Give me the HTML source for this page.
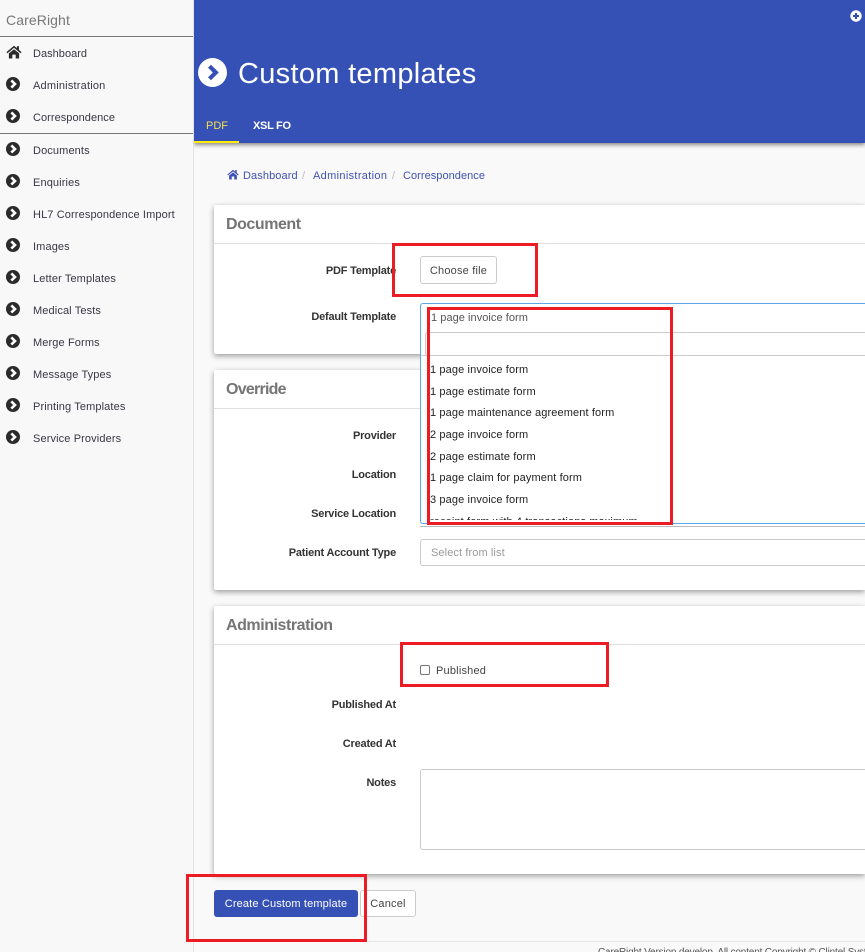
<!DOCTYPE html>
<html lang="en">
<head>
<meta charset="utf-8">
<title>Custom templates</title>
<style>
html,body{margin:0;padding:0;width:865px;height:952px;overflow:hidden;background:#f9f9f9;font-family:"Liberation Sans",sans-serif;font-size:11px;color:#333}
*{box-sizing:border-box}
#wrap{position:absolute;left:0;top:0;width:865px;height:952px;overflow:hidden}
.a{position:absolute;white-space:nowrap}
#side{position:absolute;left:0;top:0;width:194px;height:952px;background:#f8f8f8;border-right:1px solid #e3e3e3;z-index:2}
.hr{position:absolute;left:0;width:193px;height:1px;background:#777}
.nav{position:absolute;left:33px;font-size:11px;line-height:14px;color:#3b3644;letter-spacing:.12px;white-space:nowrap}
.ic{position:absolute;left:6px;width:14px;height:14px}
.card{position:absolute;left:214px;width:651px;background:#fff;border-radius:2px 0 0 2px;box-shadow:0 2px 6px rgba(0,0,0,.38);clip-path:inset(-10px 0 -10px -10px)}
.card h3{position:absolute;left:12px;top:10px;margin:0;font-size:16px;line-height:20px;font-weight:bold;color:#757575;letter-spacing:-.45px}
.card i{position:absolute;left:0;right:0;height:1px;background:#e0e0e0;display:block}
.lb{position:absolute;left:206px;width:190px;text-align:right;font-weight:bold;font-size:11px;line-height:14px;color:#333;letter-spacing:-.2px;white-space:nowrap}
.opt{position:absolute;left:430px;font-size:11px;line-height:14px;color:#222;letter-spacing:.12px;white-space:nowrap}
.red{position:absolute;border:3px solid #ed1c24;z-index:10}
.bc{position:absolute;top:169px;font-size:11px;line-height:14px;color:#3f51b5;letter-spacing:.1px;white-space:nowrap}
</style>
</head>
<body>
<div id="wrap">
<div id="side">
<div class="a" style="left:6px;top:12px;font-size:14px;line-height:17px;color:#777;letter-spacing:.1px">CareRight</div>
<div class="hr" style="top:36px"></div>
<div class="hr" style="top:133px"></div>
<svg class="ic" style="left:6px;top:45px;width:16px;height:14px" viewBox="0 0 17 15"><path d="M8.500 0.800 L0.400 7.600 L1.500 8.800 L8.500 3 L15.500 8.800 L16.600 7.600 L13.800 5.200 V1.300 H11.600 V3.400 Z M3 9 L8.500 4.500 L14 9 V14.500 H10.300 V10.300 H6.700 V14.500 H3 Z" fill="#2b2b2b"/></svg>
<div class="nav" style="top:47px;letter-spacing:.03px">Dashboard</div>
<svg class="ic" style="top:77px" viewBox="0 0 14 14"><circle cx="7" cy="7" r="7" fill="#2b2b2b"/><path d="M5.300 3.400 L9 7 L5.300 10.600" fill="none" stroke="#fff" stroke-width="2.600"/></svg>
<div class="nav" style="top:79px;letter-spacing:.2px">Administration</div>
<svg class="ic" style="top:109px" viewBox="0 0 14 14"><circle cx="7" cy="7" r="7" fill="#2b2b2b"/><path d="M5.300 3.400 L9 7 L5.300 10.600" fill="none" stroke="#fff" stroke-width="2.600"/></svg>
<div class="nav" style="top:111px;letter-spacing:.05px">Correspondence</div>
<svg class="ic" style="top:142px" viewBox="0 0 14 14"><circle cx="7" cy="7" r="7" fill="#2b2b2b"/><path d="M5.300 3.400 L9 7 L5.300 10.600" fill="none" stroke="#fff" stroke-width="2.600"/></svg>
<div class="nav" style="top:144px">Documents</div>
<svg class="ic" style="top:174px" viewBox="0 0 14 14"><circle cx="7" cy="7" r="7" fill="#2b2b2b"/><path d="M5.300 3.400 L9 7 L5.300 10.600" fill="none" stroke="#fff" stroke-width="2.600"/></svg>
<div class="nav" style="top:176px">Enquiries</div>
<svg class="ic" style="top:206px" viewBox="0 0 14 14"><circle cx="7" cy="7" r="7" fill="#2b2b2b"/><path d="M5.300 3.400 L9 7 L5.300 10.600" fill="none" stroke="#fff" stroke-width="2.600"/></svg>
<div class="nav" style="top:208px">HL7 Correspondence Import</div>
<svg class="ic" style="top:238px" viewBox="0 0 14 14"><circle cx="7" cy="7" r="7" fill="#2b2b2b"/><path d="M5.300 3.400 L9 7 L5.300 10.600" fill="none" stroke="#fff" stroke-width="2.600"/></svg>
<div class="nav" style="top:240px">Images</div>
<svg class="ic" style="top:270px" viewBox="0 0 14 14"><circle cx="7" cy="7" r="7" fill="#2b2b2b"/><path d="M5.300 3.400 L9 7 L5.300 10.600" fill="none" stroke="#fff" stroke-width="2.600"/></svg>
<div class="nav" style="top:272px">Letter Templates</div>
<svg class="ic" style="top:302px" viewBox="0 0 14 14"><circle cx="7" cy="7" r="7" fill="#2b2b2b"/><path d="M5.300 3.400 L9 7 L5.300 10.600" fill="none" stroke="#fff" stroke-width="2.600"/></svg>
<div class="nav" style="top:304px">Medical Tests</div>
<svg class="ic" style="top:334px" viewBox="0 0 14 14"><circle cx="7" cy="7" r="7" fill="#2b2b2b"/><path d="M5.300 3.400 L9 7 L5.300 10.600" fill="none" stroke="#fff" stroke-width="2.600"/></svg>
<div class="nav" style="top:336px">Merge Forms</div>
<svg class="ic" style="top:366px" viewBox="0 0 14 14"><circle cx="7" cy="7" r="7" fill="#2b2b2b"/><path d="M5.300 3.400 L9 7 L5.300 10.600" fill="none" stroke="#fff" stroke-width="2.600"/></svg>
<div class="nav" style="top:368px">Message Types</div>
<svg class="ic" style="top:398px" viewBox="0 0 14 14"><circle cx="7" cy="7" r="7" fill="#2b2b2b"/><path d="M5.300 3.400 L9 7 L5.300 10.600" fill="none" stroke="#fff" stroke-width="2.600"/></svg>
<div class="nav" style="top:400px">Printing Templates</div>
<svg class="ic" style="top:430px" viewBox="0 0 14 14"><circle cx="7" cy="7" r="7" fill="#2b2b2b"/><path d="M5.300 3.400 L9 7 L5.300 10.600" fill="none" stroke="#fff" stroke-width="2.600"/></svg>
<div class="nav" style="top:432px">Service Providers</div>
</div>

<div class="a" style="left:194px;top:0;width:671px;height:143px;background:#3551b5;box-shadow:0 2px 4px rgba(0,0,0,.45)"></div>
<div class="a" style="left:194px;top:141px;width:45px;height:2px;background:#ffeb00"></div>
<svg class="a" style="left:850px;top:10px;width:12px;height:12px" viewBox="0 0 12 12"><circle cx="6" cy="6" r="5.700" fill="#fff"/><path d="M6 3 V9 M3 6 H9" stroke="#3551b5" stroke-width="2"/></svg>
<svg class="a" style="left:198px;top:58px;width:29px;height:29px" viewBox="0 0 29 29"><circle cx="14.500" cy="14.500" r="14.500" fill="#fff"/><path d="M11.500 8.200 L17.800 14.500 L11.500 20.800" fill="none" stroke="#3551b5" stroke-width="4.200"/></svg>
<div class="a" style="left:238px;top:56px;font-size:29px;line-height:36px;color:#fff;letter-spacing:.3px">Custom templates</div>
<div class="a" style="left:206px;top:119px;font-size:11px;line-height:14px;color:#f4e04d;letter-spacing:0">PDF</div>
<div class="a" style="left:253px;top:119px;font-size:11px;line-height:14px;color:#fff;letter-spacing:-.3px;font-weight:bold">XSL FO</div>

<svg class="a" style="left:227px;top:169px;width:12px;height:11px" viewBox="0 0 17 15"><path d="M8.500 0.800 L0.400 7.600 L1.500 8.800 L8.500 3 L15.500 8.800 L16.600 7.600 L13.800 5.200 V1.300 H11.600 V3.400 Z M3 9 L8.500 4.500 L14 9 V14.500 H10.300 V10.300 H6.700 V14.500 H3 Z" fill="#3f51b5"/></svg>
<div class="bc" style="left:243px">Dashboard</div>
<div class="bc" style="left:302px;color:#bbb">/</div>
<div class="bc" style="left:313px;letter-spacing:.33px">Administration</div>
<div class="bc" style="left:392px;color:#bbb">/</div>
<div class="bc" style="left:403px;letter-spacing:.05px">Correspondence</div>

<div class="card" style="top:205px;height:149px"><h3>Document</h3><i style="top:38px"></i></div>
<div class="card" style="top:370px;height:220px"><h3 style="letter-spacing:-.75px">Override</h3><i style="top:38px"></i></div>
<div class="card" style="top:606px;height:268px"><h3>Administration</h3><i style="top:38px"></i></div>

<div class="lb" style="top:264px">PDF Template</div>
<div class="lb" style="top:310px">Default Template</div>
<div class="lb" style="top:429px">Provider</div>
<div class="lb" style="top:468px">Location</div>
<div class="lb" style="top:507px">Service Location</div>
<div class="lb" style="top:546px">Patient Account Type</div>
<div class="lb" style="top:698px">Published At</div>
<div class="lb" style="top:737px">Created At</div>
<div class="lb" style="top:776px">Notes</div>

<div class="a" style="left:420px;top:256px;width:77px;height:28px;background:#fff;border:1px solid #ccc;border-radius:3px;text-align:center;padding-top:1px;line-height:26px;font-size:11px;color:#444;letter-spacing:.2px">Choose file</div>

<div class="a" style="left:420px;top:526px;width:445px;height:1px;background:#bbb"></div>
<div class="a" style="left:420px;top:303px;width:445px;height:221px;background:#fff;border:1px solid #5ba8e8;border-right:0;border-radius:3px 0 0 3px"></div>
<div class="a" style="left:425px;top:332px;width:440px;height:24px;background:#fff;border:1px solid #ccc;border-right:0;border-radius:3px 0 0 3px"></div>
<div class="a" style="left:421px;top:355px;width:444px;height:1px;background:#ccc"></div>
<div class="opt" style="left:431px;top:311px;color:#555;letter-spacing:.05px">1 page invoice form</div>
<div class="opt" style="top:363px">1 page invoice form</div>
<div class="opt" style="top:385px">1 page estimate form</div>
<div class="opt" style="top:406px">1 page maintenance agreement form</div>
<div class="opt" style="top:428px">2 page invoice form</div>
<div class="opt" style="top:450px">2 page estimate form</div>
<div class="opt" style="top:471px">1 page claim for payment form</div>
<div class="opt" style="top:493px">3 page invoice form</div>
<div class="a" style="left:430px;top:511px;width:300px;height:9px;overflow:hidden"><div style="position:absolute;left:0;top:4px;font-size:11px;line-height:14px;color:#222;letter-spacing:.12px;white-space:nowrap">receipt form with 4 transactions maximum</div></div>

<div class="a" style="left:420px;top:539px;width:445px;height:27px;background:#fff;border:1px solid #ccc;border-right:0;border-radius:3px 0 0 3px;padding-left:10px;padding-top:1px;line-height:25px;font-size:11px;color:#999;letter-spacing:.1px">Select from list</div>

<div class="a" style="left:420px;top:665px;width:10px;height:10px;background:#fff;border:1px solid #777;border-radius:2px"></div>
<div class="a" style="left:436px;top:664px;font-size:11px;line-height:14px;color:#444;letter-spacing:.2px">Published</div>

<div class="a" style="left:420px;top:769px;width:445px;height:81px;background:#fff;border:1px solid #ccc;border-right:0;border-radius:3px 0 0 3px"></div>

<div class="a" style="left:214px;top:890px;width:144px;height:27px;background:#3551b5;border-radius:3px;text-align:center;padding-top:1px;line-height:26px;font-size:11px;color:#fff;letter-spacing:.15px">Create Custom template</div>
<div class="a" style="left:360px;top:890px;width:56px;height:27px;background:#fff;border:1px solid #ccc;border-radius:3px;text-align:center;padding-top:1px;line-height:25px;font-size:11px;color:#444;letter-spacing:.2px">Cancel</div>

<div class="a" style="left:194px;top:941px;width:671px;height:1px;background:#e5e5e5"></div>
<div class="a" style="left:598px;top:942px;width:267px;height:10px;overflow:hidden"><div style="position:absolute;left:0;top:4px;font-size:10px;line-height:13px;color:#555;letter-spacing:-.17px;white-space:nowrap">CareRight Version develop. All content Copyright © Clintel Syst</div></div>

<div class="red" style="left:392px;top:243px;width:146px;height:54px"></div>
<div class="red" style="left:427px;top:307px;width:246px;height:218px"></div>
<div class="red" style="left:400px;top:642px;width:209px;height:45px"></div>
<div class="red" style="left:186px;top:874px;width:181px;height:68px"></div>
</div>
</body>
</html>
